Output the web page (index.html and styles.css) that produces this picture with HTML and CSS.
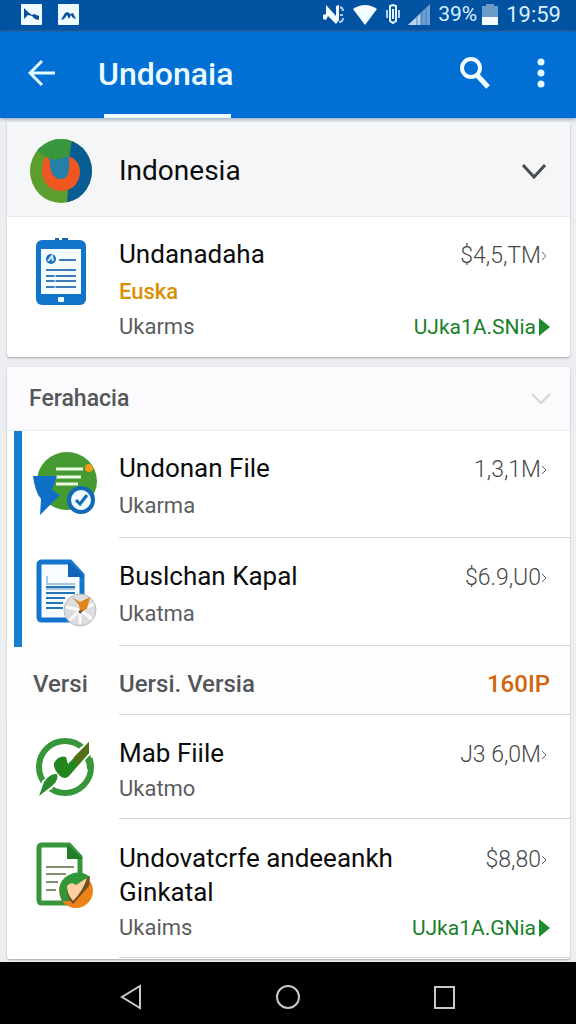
FILE: index.html
```html
<!DOCTYPE html>
<html lang="id">
<head>
    <meta charset="UTF-8">
    <meta name="viewport" content="width=device-width, initial-scale=1.0">
    <title>Undonaia</title>
    <link rel="stylesheet" href="styles.css">
</head>
<body>
    <div class="status-bar">
        <div class="status-left">
            <svg width="21" height="21" viewBox="0 0 21 21"><rect width="21" height="21" rx="1" fill="#eefcff"/><path d="M3 4l4 4 4 3 2-1 5 2v4l-4-1-3-3-4-1-4 4z" fill="#0a4f9c"/></svg>
            <svg width="21" height="21" viewBox="0 0 21 21"><rect width="21" height="21" rx="1" fill="#eefcff"/><path d="M3 16l4-7 3-1 2 2 3-1 3 6-3-1-2-3-2 4-2-4-3 4z" fill="#0a4f9c"/></svg>
        </div>
        <div class="status-right">
            <svg width="22" height="22" viewBox="0 0 22 22"><path d="M1 16V12l3-1V2l10 11V3l3-1v15l-3 4-8-8-2 4z" fill="#f2fbff"/><path d="M18 4q3 1 3 4M18 12h3M17 19q4 0 4-4" fill="none" stroke="#a9cbe8" stroke-width="2"/></svg>
            <svg width="26" height="21" viewBox="0 0 26 21"><path d="M1 5Q13-3 25 5L13 21z" fill="#f4fdff"/></svg>
            <svg width="14" height="20" viewBox="0 0 14 20"><path d="M4 2l3-1 3 1v15l-3 2-3-2zM7 5v10" fill="none" stroke="#e5f4ff" stroke-width="2"/><path d="M1 6v8M13 6v8" stroke="#b5d3ee" stroke-width="2"/></svg>
            <svg width="22" height="21" viewBox="0 0 22 21"><path d="M0 21L22 0v21z" fill="#6fa0d0"/><path d="M0 21L12 10v11z" fill="#b8d5ef"/><path d="M9 12v9M14 8v13M18 4v17" stroke="#4c83bd"/></svg>
            <span>39%</span>
            <svg class="battery" width="16" height="21" viewBox="0 0 16 21"><path d="M0 2h4V0h8v2h4v11H0z" fill="#6b9bc9"/><path d="M0 13h16v8H0z" fill="#f4fdff"/></svg>
            <span class="clock">19:59</span>
        </div>
    </div>

    <header class="app-bar">
        <button class="icon-button back" aria-label="Back">
            <svg width="28" height="28" viewBox="0 0 28 28"><path d="M27 14H3M14 2L2 14l12 12" fill="none" stroke="#e4fbff" stroke-width="3"/></svg>
        </button>
        <h1>Undonaia</h1>
        <button class="icon-button search" aria-label="Search">
            <svg width="32" height="34" viewBox="0 0 32 34"><circle cx="12" cy="12" r="9" fill="none" stroke="#f2fdff" stroke-width="4"/><path d="M18 19l11 12" stroke="#f2fdff" stroke-width="5"/></svg>
        </button>
        <button class="icon-button more" aria-label="More">
            <svg width="8" height="30" viewBox="0 0 8 30"><g fill="#e4fbff"><circle cx="4" cy="4" r="3.500"/><circle cx="4" cy="15" r="3.500"/><circle cx="4" cy="26" r="3.500"/></g></svg>
        </button>
    </header>

    <main>
        <section class="card">
            <div class="card-header">
                <div class="icon">
                    <svg width="62" height="64" viewBox="0 0 62 64">
                        <clipPath id="globe"><ellipse cx="31" cy="32" rx="31" ry="32"/></clipPath>
                        <g clip-path="url(#globe)">
                            <path d="M0 0h62v64H0z" fill="#5b9e2d"/>
                            <path d="M12 0h32l-5 18-10 3-12-3L7 12z" fill="#38963d"/>
                            <path d="M42 0h20v64H37l1-14 1-30z" fill="#075c94"/>
                            <path d="M19 19q10 4 20-3l2 20-10 7-11-6z" fill="#2480a8"/>
                        </g>
                        <path d="M15 18q5 0 5 6c0 10 4 16 11 16s9-7 8-23q11 5 11 16c0 11-8 19-19 19-15 0-24-17-16-34z" fill="#ee5820"/>
                    </svg>
                </div>
                <h2>Indonesia</h2>
                <button class="icon-button" aria-label="Collapse Indonesia">
                    <svg width="24" height="16" viewBox="0 0 24 16"><path d="M1 2l11 12L23 2" fill="none" stroke="#4a4d50" stroke-width="3"/></svg>
                </button>
            </div>
            <div class="row">
                <div class="icon">
                    <svg width="50" height="68" viewBox="0 0 50 68">
                        <path d="M19 4V1h4v2h3V1h6v3z" fill="#1465ae"/>
                        <rect y="3" width="50" height="65" rx="6" fill="#1274cb"/>
                        <path d="M5 12h40v45H5z" fill="#f4fcff"/>
                        <circle cx="15" cy="22" r="5" fill="#1b6fb8"/>
                        <path d="M12 24l4-5 1 5" fill="none" stroke="#d9efff" stroke-width="2"/>
                        <path d="M23 23h17M10 33h30M10 39h30M10 44h30M10 50h30" stroke="#3b7db6" stroke-width="2"/>
                        <path d="M19 36v16" stroke="#f4fcff"/>
                        <rect x="22" y="60" width="6" height="5" rx="1" fill="#eefaff"/>
                    </svg>
                </div>
                <div class="text">
                    <h3>Undanadaha</h3>
                    <p class="warning">Euska</p>
                    <p>Ukarms</p>
                </div>
                <div class="values">
                    <span class="price">$4,5,TM<svg width="6" height="10" viewBox="0 0 6 10"><path d="M1 1l4 4-4 4"/></svg></span>
                    <a class="more-link" href="#">UJka1A.SNia<svg width="11" height="18" viewBox="0 0 11 18"><path d="M0 0l11 9-11 9z"/></svg></a>
                </div>
            </div>
        </section>

        <section class="card">
            <div class="card-header group-header">
                <h2>Ferahacia</h2>
                <button class="icon-button" aria-label="Collapse Ferahacia">
                    <svg width="20" height="12" viewBox="0 0 20 12"><path d="M1 1l9 9 9-9" fill="none" stroke="#d3d5d7" stroke-width="2"/></svg>
                </button>
            </div>
            <div class="marked">
                <div class="row">
                    <div class="icon">
                        <svg width="66" height="66" viewBox="0 2 66 66">
                            <ellipse cx="35" cy="32" rx="30" ry="29" fill="#459b32"/>
                            <path d="M24 20h27M24 28h25M24 35h22" stroke="#effae3" stroke-width="3"/>
                            <circle cx="57" cy="19" r="4" fill="#f39a17"/>
                            <path d="M1 27h24l-5 14 8 5L8 66l1-16q-6-7-8-23z" fill="#0f6fc6"/>
                            <circle cx="49" cy="51" r="12" fill="#edfaff" stroke="#1269b4" stroke-width="4"/>
                            <path d="M44 51l4 4 7-9" fill="none" stroke="#1269b4" stroke-width="3"/>
                        </svg>
                    </div>
                    <div class="text">
                        <h3>Undonan File</h3>
                        <p>Ukarma</p>
                    </div>
                    <div class="values">
                        <span class="price">1,3,1M<svg width="6" height="10" viewBox="0 0 6 10"><path d="M1 1l4 4-4 4"/></svg></span>
                    </div>
                </div>
                <div class="row">
                    <div class="icon">
                        <svg width="66" height="68" viewBox="-4 0 66 68">
                            <path d="M6 3h28l12 13v45H6q-3 0-3-3V6q0-3 3-3z" fill="#f6fcff" stroke="#1475cc" stroke-width="5"/>
                            <path d="M32 2l16 16H32z" fill="#0f64b6"/>
                            <path d="M11 17v7M10 25h29M10 30h29" stroke="#5994c8"/>
                            <path d="M10 28h29M10 34h29M10 39h19M10 44h17M10 49h17" stroke="#2475b8" stroke-width="2"/>
                            <circle cx="44" cy="51" r="16" fill="#dcdde0" stroke="#b9bcc0"/>
                            <path d="M44 51L34 61M44 51v14M44 51l12 9M44 51l14-6M44 51L30 48" stroke="#fafafa" stroke-width="3"/>
                            <path d="M36 38l8 5 10-5-3 12-7 3-1-7z" fill="#df851c"/>
                            <path d="M42 52l6-1-4 4z" fill="#774e2b"/>
                        </svg>
                    </div>
                    <div class="text">
                        <h3>Buslchan Kapal</h3>
                        <p>Ukatma</p>
                    </div>
                    <div class="values">
                        <span class="price">$6.9,U0<svg width="6" height="10" viewBox="0 0 6 10"><path d="M1 1l4 4-4 4"/></svg></span>
                    </div>
                </div>
            </div>
            <div class="version">
                <span class="version-label">Versi</span>
                <span>Uersi. Versia</span>
                <span class="version-value">160IP</span>
            </div>
            <div class="row compact">
                <div class="icon">
                    <svg width="60" height="62" viewBox="0 0 60 62">
                        <circle cx="30" cy="31" r="26" fill="none" stroke="#37963a" stroke-width="6"/>
                        <path d="M42 14L58 2l2 18-15 8z" fill="#fff"/>
                        <path d="M55 19q3 6 3 14h-6q0-5-2-9z" fill="#37963a"/>
                        <path d="M3 61l4-16 12-9 5 5-7 12z" fill="#fff"/>
                        <path d="M4 60l5-14q6-9 13-8 2 6-5 12z" fill="#2b8a2b"/>
                        <path d="M19 27q5-8 12-6l2 7L54 6v11L34 40q-4 4-9 0-7-7-6-13z" fill="#23861f"/>
                        <path d="M39 21L54 6v11L42 30z" fill="#536f17"/>
                    </svg>
                </div>
                <div class="text">
                    <h3>Mab Fiile</h3>
                    <p>Ukatmo</p>
                </div>
                <div class="values">
                    <span class="price">J3 6,0M<svg width="6" height="10" viewBox="0 0 6 10"><path d="M1 1l4 4-4 4"/></svg></span>
                </div>
            </div>
            <div class="row compact">
                <div class="icon">
                    <svg width="60" height="68" viewBox="0 0 60 68">
                        <path d="M7 4h27l11 12v46H7q-3 0-3-3V7q0-3 3-3z" fill="#fff" stroke="#37953a" stroke-width="5"/>
                        <path d="M32 3l16 15H32z" fill="#247d29"/>
                        <path d="M11 26h28M11 33h20M11 41h12M11 49h10" stroke="#809270" stroke-width="2"/>
                        <circle cx="41" cy="50" r="17" fill="#ed8219"/>
                        <path d="M27 60Q19 40 36 33q10-4 19 3L35 60z" fill="#31983a"/>
                        <path d="M32 48q5-7 9-2l14-11-1 10-16 18q-6-5-6-15z" fill="#704d24"/>
                        <path d="M32 45q4-5 9-1l11-7q-4 13-14 23-6-7-6-15z" fill="#ffd0a0"/>
                    </svg>
                </div>
                <div class="text">
                    <h3>Undovatcrfe andeeankh Ginkatal</h3>
                    <p>Ukaims</p>
                </div>
                <div class="values">
                    <span class="price">$8,80<svg width="6" height="10" viewBox="0 0 6 10"><path d="M1 1l4 4-4 4"/></svg></span>
                    <a class="more-link" href="#">UJka1A.GNia<svg width="11" height="18" viewBox="0 0 11 18"><path d="M0 0l11 9-11 9z"/></svg></a>
                </div>
            </div>
        </section>
    </main>

    <nav class="nav-bar">
        <button class="icon-button" aria-label="Back"><svg width="24" height="28" viewBox="0 0 24 28"><path d="M21 3v22L3 14z" fill="none" stroke="#c9c9c9" stroke-width="2"/></svg></button>
        <button class="icon-button" aria-label="Home"><svg width="26" height="26" viewBox="0 0 26 26"><circle cx="13" cy="13" r="11" fill="none" stroke="#c9c9c9" stroke-width="2"/></svg></button>
        <button class="icon-button" aria-label="Recent apps"><svg width="24" height="26" viewBox="0 0 24 26"><path d="M2 3h19v21H2z" fill="none" stroke="#c9c9c9" stroke-width="2"/></svg></button>
    </nav>
</body>
</html>
```

FILE: styles.css
```css
* {
    box-sizing: border-box;
}
body {
    display: flex;
    flex-direction: column;
    min-height: 100vh;
    margin: 0;
    background: #eceef1;
    color: #0c0c0c;
    font-family: Roboto, sans-serif;
}
h1, h2, h3, p {
    margin: 0;
    font-weight: 400;
}
svg {
    display: block;
    flex: none;
}
.icon-button {
    padding: 0;
    border: 0;
    background: none;
    cursor: pointer;
}

/* status bar */
.status-bar {
    display: flex;
    justify-content: space-between;
    height: 32px;
    padding: 2px 15px 6px 21px;
    background: #0152a1;
    color: #d8efff;
    font-size: 21px;
}
.status-left, .status-right {
    display: flex;
    align-items: center;
}
.status-left {
    gap: 16px;
}
.status-right {
    gap: 8px;
}
.battery {
    margin-left: -3px;
}
.clock {
    font-size: 22px;
}

/* app bar */
.app-bar {
    display: flex;
    align-items: stretch;
    height: 86px;
    padding: 0 31px 0 28px;
    background: #026fd5;
    box-shadow: 0 1px 4px #8d9cb5;
}
.app-bar h1 {
    position: relative;
    margin-left: 42px;
    color: #e8fbff;
    font-size: 32px;
    font-weight: 500;
    line-height: 84px;
}
.app-bar h1::after {
    content: "";
    position: absolute;
    right: 2px;
    bottom: 0;
    left: 6px;
    height: 4px;
    background: #eefcff;
}
.back, .search, .more {
    padding-bottom: 4px;
}
.search {
    margin-left: auto;
}
.more {
    margin-left: 46px;
}

/* cards */
main {
    flex: 1;
    padding: 4px 6px 3px 7px;
}
.card {
    margin-bottom: 10px;
    background: #fff;
    border-radius: 3px;
    box-shadow: 0 1px 2px #a3a6aa;
}
.card:last-child {
    margin-bottom: 0;
}
.card-header {
    display: flex;
    align-items: center;
    height: 95px;
    padding: 3px 24px 0 0;
    background: #f5f6f8;
    border-bottom: 1px solid #eaebed;
    border-radius: 3px 3px 0 0;
}
.card-header h2 {
    flex: 1;
    font-size: 28px;
}
.group-header {
    height: 64px;
    padding: 0 19px 0 22px;
    background: #fbfbfd;
}
.group-header h2 {
    color: #55565a;
    font-size: 23px;
    font-weight: 500;
}
.icon {
    flex: none;
    width: 112px;
    padding-right: 4px;
}
.icon svg {
    margin: 0 auto;
}
.row {
    display: flex;
    position: relative;
    padding: 20px 20px 16px 0;
}
.row p {
    margin-top: 7px;
    color: #5c5d5f;
    font-size: 22px;
    line-height: 28px;
}
.row .warning {
    color: #d99000;
    font-weight: 500;
}
.row h3 {
    font-size: 26px;
    line-height: 34px;
}
.text {
    flex: 1;
}
.marked {
    border-left: 8px solid #187fd0;
    margin-left: 7px;
}
.marked .icon {
    width: 97px;
    padding-right: 12px;
}
.marked .row {
    padding-bottom: 18px;
}
/* divider starts at the text column */
.marked .row::after, .compact::after, .version::after {
    content: "";
    position: absolute;
    right: 0;
    bottom: 0;
    left: 112px;
    height: 1px;
    background: #d5d6d8;
}
.marked .row::after {
    left: 97px;
}
.marked .row, .compact {
    border-bottom: 1px solid transparent;
}
.compact {
    padding-top: 21px;
}
.compact p {
    margin-top: 5px;
}
.compact .icon {
    padding: 0 0 0 4px;
}
.values {
    display: flex;
    flex-direction: column;
    justify-content: space-between;
    align-items: flex-end;
}
.price {
    display: flex;
    align-items: center;
    padding-right: 3px;
    color: #47484a;
    font-size: 23px;
    font-weight: 300;
    line-height: 38px;
}
.price svg {
    fill: none;
    stroke: #66686a;
}
.more-link {
    display: flex;
    align-items: center;
    gap: 3px;
    color: #19802a;
    font-size: 21px;
    line-height: 28px;
    text-decoration: none;
}
.more-link svg {
    fill: #1d8c2c;
}
.version {
    display: flex;
    position: relative;
    align-items: center;
    height: 68px;
    padding: 6px 20px 0 0;
    color: #55565a;
    background: #fdfdfe;
    font-size: 24px;
    font-weight: 500;
}
.version-label {
    width: 112px;
    padding-left: 26px;
}
.version-value {
    margin-left: auto;
    color: #d2640b;
}

/* navigation bar */
.nav-bar {
    display: flex;
    justify-content: center;
    align-items: center;
    gap: 132px;
    height: 63px;
    padding-top: 6px;
    background: #000;
}
```
